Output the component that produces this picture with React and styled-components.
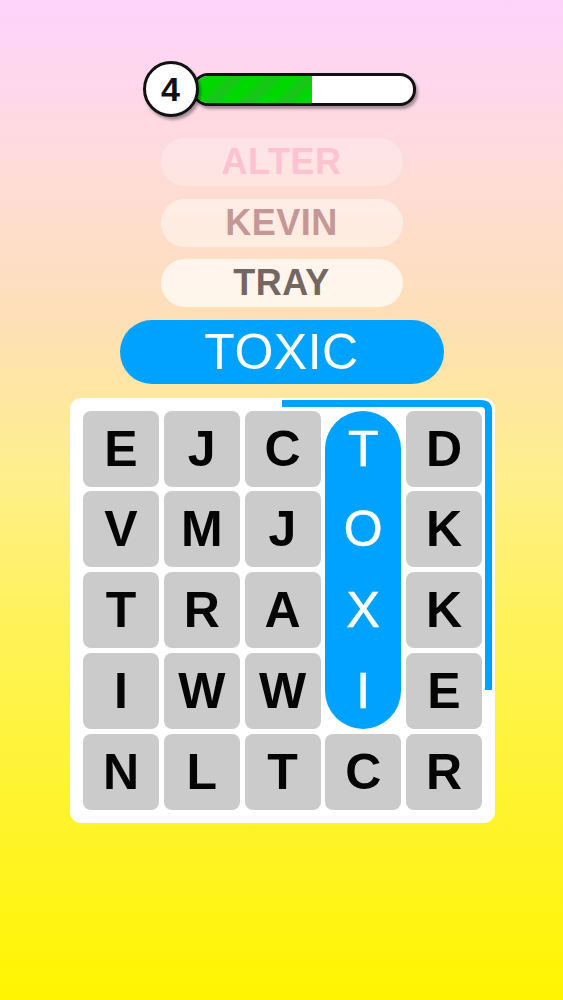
import React from "react";
import styled, { createGlobalStyle } from "styled-components";

const GlobalStyle = createGlobalStyle`
  html, body {
    margin: 0;
    padding: 0;
  }
  body {
    font-family: "Liberation Sans", Arial, sans-serif;
  }
`;

const Screen = styled.div`
  width: 563px;
  min-height: 1000px;
  display: flex;
  flex-direction: column;
  align-items: center;
  background: linear-gradient(
    180deg,
    #fdd3fd 0%,
    #fedcd6 18%,
    #fedfb6 32%,
    #fef08a 48%,
    #fff25a 62%,
    #fff500 100%
  );
  overflow: hidden;
`;

const LevelRow = styled.div`
  margin-top: 61px;
  display: flex;
  align-items: center;
  margin-left: -5px;
`;

const LevelBadge = styled.div`
  position: relative;
  z-index: 2;
  width: 50px;
  height: 50px;
  border-radius: 50%;
  border: 3px solid #111;
  background: #fff;
  box-shadow: 2px 3px 3px rgba(0, 0, 0, 0.35);
  display: flex;
  align-items: center;
  justify-content: center;
  font-size: 34px;
  font-weight: 700;
  color: #111;
`;

const Track = styled.div`
  width: 218px;
  height: 27px;
  margin-left: -7px;
  border: 3px solid #111;
  border-radius: 16px;
  background: #fff;
  overflow: hidden;
  box-shadow: 2px 3px 3px rgba(0, 0, 0, 0.35);
`;

const Fill = styled.div`
  height: 100%;
  background: repeating-linear-gradient(
    -45deg,
    #00d800 0px,
    #00d800 14px,
    #16c816 14px,
    #16c816 26px
  );
`;

const Words = styled.div`
  margin-top: 21px;
  display: flex;
  flex-direction: column;
  align-items: center;
  gap: 12.5px;
`;

const WordPill = styled.div`
  width: 242px;
  height: 48px;
  border-radius: 24px;
  background: ${(p) => p.$bg};
  color: ${(p) => p.$color};
  display: flex;
  align-items: center;
  justify-content: center;
  font-size: 36px;
  font-weight: 700;
  letter-spacing: 0.5px;
`;

const CurrentWord = styled.div`
  width: 324px;
  height: 64px;
  border-radius: 32px;
  background: #00a2ff;
  color: #fff;
  display: flex;
  align-items: center;
  justify-content: center;
  font-size: 50px;
  font-weight: 400;
  letter-spacing: 0.5px;
`;

const Board = styled.div`
  position: relative;
  margin-top: 14px;
  margin-left: 2px;
  width: 399px;
  padding: 13px;
  background: #fff;
  border-radius: 11px;
  display: grid;
  grid-template-columns: repeat(5, 76px);
  grid-auto-rows: 76px;
  gap: 4.75px;
`;

const Timer = styled.svg`
  position: absolute;
  left: 0;
  top: 0;
  pointer-events: none;
`;

const Cell = styled.div`
  position: relative;
  z-index: 1;
  background: #cbcbcb;
  border-radius: 8px;
  display: flex;
  align-items: center;
  justify-content: center;
  font-size: 50px;
  font-weight: 700;
  color: #050505;
`;

const Selection = styled.div`
  position: relative;
  z-index: 1;
  grid-column: ${(p) => p.$col};
  grid-row: ${(p) => p.$from} / span ${(p) => p.$len};
  background: #00a2ff;
  border-radius: 38px;
  display: flex;
  flex-direction: column;
  gap: 4.75px;
`;

const SelLetter = styled.div`
  height: 76px;
  display: flex;
  align-items: center;
  justify-content: center;
  font-size: 50px;
  color: #fff;
  -webkit-text-stroke: 0.6px #fff;
`;

const grid = [
  "EJCTD",
  "VMJOK",
  "TRAXK",
  "IWWIE",
  "NLTCR",
];

const found = [
  { word: "ALTER", bg: "rgba(255,255,255,0.25)", color: "#ffc2d0" },
  { word: "KEVIN", bg: "rgba(255,255,255,0.45)", color: "#c59797" },
  { word: "TRAY", bg: "rgba(255,255,255,0.7)", color: "#746660" },
];

export default function App() {
  const selCol = 3;
  const selRows = [0, 1, 2, 3];
  const progress = 0.54;

  const cells = [];
  grid.forEach((row, r) => {
    row.split("").forEach((ch, c) => {
      if (c === selCol && selRows.includes(r)) return;
      cells.push(
        <Cell key={`${r}-${c}`} style={{ gridColumn: c + 1, gridRow: r + 1 }}>
          {ch}
        </Cell>
      );
    });
  });

  return (
    <>
      <GlobalStyle />
      <Screen>
        <LevelRow>
          <LevelBadge>4</LevelBadge>
          <Track>
            <Fill style={{ width: `${progress * 100}%` }} />
          </Track>
        </LevelRow>

        <Words>
          {found.map((w) => (
            <WordPill key={w.word} $bg={w.bg} $color={w.color}>
              {w.word}
            </WordPill>
          ))}
          <CurrentWord>TOXIC</CurrentWord>
        </Words>

        <Board>
          <Timer width="425" height="425" viewBox="0 0 425 425">
            <path
              d="M 212 5.5 L 411 5.5 Q 418.5 5.5 418.5 13 L 418.5 292"
              fill="none"
              stroke="#00a2ff"
              strokeWidth="7"
            />
          </Timer>
          {cells}
          <Selection $col={selCol + 1} $from={1} $len={4}>
            {selRows.map((r) => (
              <SelLetter key={r}>{grid[r][selCol]}</SelLetter>
            ))}
          </Selection>
        </Board>
      </Screen>
    </>
  );
}
